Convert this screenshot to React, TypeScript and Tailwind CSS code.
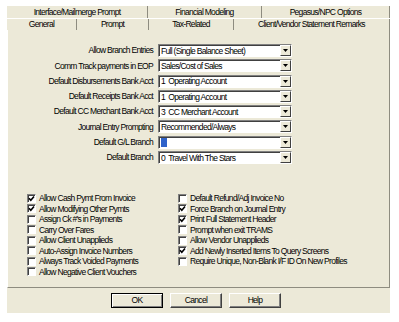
const backTabs = [
  { label: 'Interface/Mailmerge Prompt', cls: 'w-[141px]' },
  { label: 'Financial Modeling', cls: 'w-[114px]' },
  { label: 'Pegasus/NPC Options', cls: 'w-[128px]' },
]

const frontTabs = [
  { label: 'General', cls: 'w-[70px]' },
  { label: 'Prompt', cls: 'w-[72px]' },
  { label: 'Tax-Related', cls: 'w-[85px]' },
  { label: 'Client/Vendor Statement Remarks', cls: 'w-[156px]' },
]

const combos = [
  { label: 'Allow Branch Entries', value: 'Full (Single Balance Sheet)' },
  { label: 'Comm Track payments in EOP', value: 'Sales/Cost of Sales' },
  { label: 'Default Disbursements Bank Acct', value: '1  Operating Account' },
  { label: 'Default Receipts Bank Acct', value: '1  Operating Account' },
  { label: 'Default CC Merchant Bank Acct', value: '3  CC Merchant Account' },
  { label: 'Journal Entry Prompting', value: 'Recommended/Always' },
  { label: 'Default G/L Branch', value: '', selected: true },
  { label: 'Default Branch', value: '0  Travel With The Stars' },
]

const checks: [string, boolean, string, boolean][] = [
  ['Allow Cash Pymt From Invoice', true, 'Default Refund/Adj Invoice No', false],
  ['Allow Modifying Other Pymts', true, 'Force Branch on Journal Entry', true],
  ["Assign Ck #'s in Payments", false, 'Print Full Statement Header', true],
  ['Carry Over Fares', false, 'Prompt when exit TRAMS', false],
  ['Allow Client Unapplieds', false, 'Allow Vendor Unapplieds', false],
  ['Auto-Assign Invoice Numbers', false, 'Add Newly Inserted Items To Query Screens', true],
  ['Always Track Voided Payments', false, 'Require Unique, Non-Blank I/F ID On New Profiles', false],
  ['Allow Negative Client Vouchers', false, '', false],
]

function Combo({ value, selected }: { value: string; selected?: boolean }) {
  return (
    <div className="ml-[5px] flex h-[13px] w-[134px] border border-t-[#808080] border-l-[#808080] border-b-white border-r-white bg-white shadow-[inset_1px_1px_0_#404040]">
      <div className="flex flex-1 items-center pl-[2px] pt-px whitespace-pre">
        {selected ? <div className="h-[9px] w-[6px] bg-[#2f62c9]" /> : value}
      </div>
      <div className="flex h-full w-[11px] items-center justify-center border border-t-white border-l-white border-b-[#404040] border-r-[#404040] bg-[#ECE9D8]">
        <svg width="5" height="3" viewBox="0 0 5 3">
          <path d="M0 0h5L2.5 3z" fill="#000" />
        </svg>
      </div>
    </div>
  )
}

function Check({ label, on }: { label: string; on: boolean }) {
  if (!label) return <div />
  return (
    <div className="flex h-[10.5px] items-center">
      <div className="flex h-[9px] w-[9px] items-center justify-center border border-t-[#808080] border-l-[#808080] border-b-white border-r-white bg-white shadow-[inset_1px_1px_0_#404040]">
        {on && (
          <svg width="7" height="7" viewBox="0 0 7 7">
            <path d="M1 3.2 L2.8 5.2 L6 1.4" fill="none" stroke="#000" strokeWidth="1.6" />
          </svg>
        )}
      </div>
      <span className="ml-[3px] whitespace-nowrap">{label}</span>
    </div>
  )
}

export default function App() {
  return (
    <div className="h-[322px] w-[399px] bg-white pl-[7px] pt-[6px] font-['Liberation_Sans',Arial,sans-serif] text-[8.5px] leading-none tracking-[-0.7px] text-black">
      <div className="flex h-[307px] w-[383px] flex-col bg-[#ECE9D8]">
        <div className="flex h-[12px]">
          {backTabs.map((t) => (
            <div
              key={t.label}
              className={`${t.cls} flex items-center justify-center border-r border-r-[#8e8c80] pt-px`}
            >
              {t.label}
            </div>
          ))}
        </div>
        <div className="flex h-[12px] border-t border-t-white">
          {frontTabs.map((t) => (
            <div
              key={t.label}
              className={`${t.cls} flex items-center justify-center border-r border-r-[#8e8c80]`}
            >
              {t.label}
            </div>
          ))}
        </div>

        <div className="flex h-[258px] flex-col border-l border-l-white border-r border-r-[#8e8c80] border-b border-b-[#8e8c80] pt-[14px]">
          <div className="flex flex-col gap-[2.3px]">
            {combos.map((c) => (
              <div key={c.label} className="flex items-center">
                <div className="w-[145px] text-right whitespace-nowrap">{c.label}</div>
                <Combo value={c.value} selected={c.selected} />
              </div>
            ))}
          </div>

          <div className="mt-[29px] grid grid-cols-[151px_1fr] pl-[19px]">
            {checks.map(([l, lo, r, ro]) => (
              <div key={l} className="contents">
                <Check label={l} on={lo} />
                <Check label={r} on={ro} />
              </div>
            ))}
          </div>
        </div>

        <div className="flex gap-[7px] pl-[104px] pt-[5px]">
          <button className="flex h-[15px] w-[52px] items-center justify-center border border-black bg-[#ECE9D8] shadow-[inset_1px_1px_0_#fff,inset_-1px_-1px_0_#808080]">
            OK
          </button>
          <button className="flex h-[15px] w-[52px] items-center justify-center border border-t-white border-l-white border-b-[#404040] border-r-[#404040] bg-[#ECE9D8] shadow-[inset_-1px_-1px_0_#808080]">
            Cancel
          </button>
          <button className="flex h-[15px] w-[52px] items-center justify-center border border-t-white border-l-white border-b-[#404040] border-r-[#404040] bg-[#ECE9D8] shadow-[inset_-1px_-1px_0_#808080]">
            Help
          </button>
        </div>
      </div>
    </div>
  )
}
